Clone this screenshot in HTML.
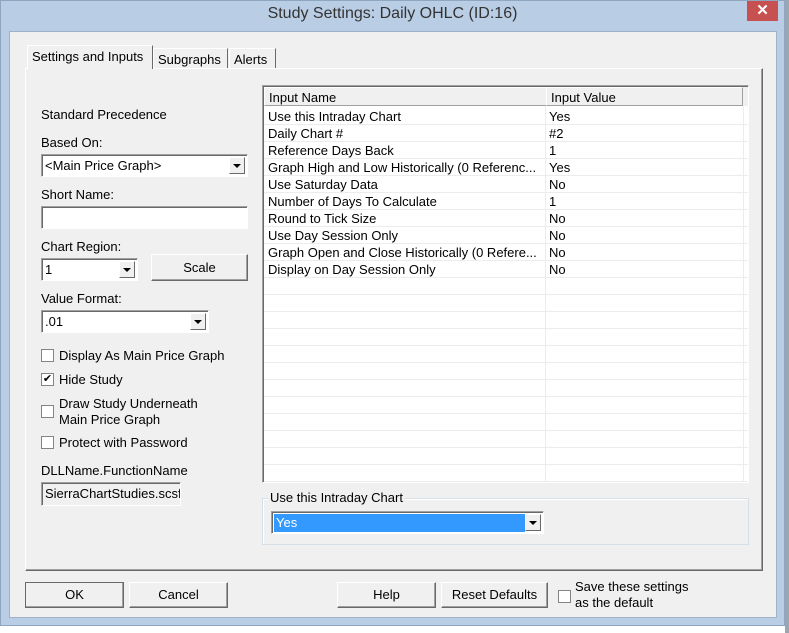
<!DOCTYPE html>
<html><head><style>
*{box-sizing:border-box;margin:0;padding:0}
body{width:789px;height:633px;position:relative;overflow:hidden;background:#fff;font-family:"Liberation Sans",sans-serif;font-size:13px;color:#000}
.a{position:absolute}
.win{left:0;top:0;width:785px;height:626px;background:#b9cee5;border:1px solid #8ea6c0}
.client{left:9px;top:31px;width:768px;height:587px;background:#f0f0f0;border:1px solid #9fb2c8}
.title{left:0;top:5px;width:785px;text-align:center;font-size:16px;color:#333}
.close{left:747px;top:1px;width:31px;height:20px;background:#c75050;color:#fff;text-align:center;font-size:15px;font-weight:bold;line-height:20px}
.panel{left:25px;top:68px;width:738px;height:503px;border:1px solid #fff;border-right-color:#696969;border-bottom-color:#696969;box-shadow:inset -1px -1px 0 #a0a0a0}
.tab{height:22px;border:1px solid #fff;border-right-color:#696969;border-bottom:none;background:#f0f0f0;padding:3px 4px 0;white-space:nowrap}
.sunk{border:1px solid #a0a0a0;border-right-color:#fff;border-bottom-color:#fff;box-shadow:inset 1px 1px 0 #696969;background:#fff}
.dd{position:absolute;right:2px;top:2px;bottom:2px;width:16px;background:#f0f0f0;border:1px solid #fff;border-right-color:#696969;border-bottom-color:#696969}
.dd:after{content:"";position:absolute;left:3px;top:6px;border:4px solid transparent;border-top:4px solid #000;border-bottom:0}
.btn{background:#f0f0f0;border:1px solid #fff;border-right-color:#696969;border-bottom-color:#696969;box-shadow:inset -1px -1px 0 #a0a0a0;text-align:center}
.cb{width:13px;height:13px;background:#fff;border:1px solid #848484}
.grid{left:262px;top:85px;width:487px;height:398px;border:1px solid #a0a0a0;border-right-color:#fff;border-bottom-color:#fff;box-shadow:inset 1px 1px 0 #696969;background:#fff;overflow:hidden}
.row{position:absolute;left:1px;width:484px;height:17px;border-bottom:1px solid #ececec}
.row span{position:absolute;top:1px}
</style></head><body>
<div class="a" style="left:785px;top:0;width:4px;height:633px;background:#9aa6b2"></div>
<div class="a win"></div>
<div class="a title">Study Settings: Daily OHLC (ID:16)</div>
<div class="a close">✕</div>
<div class="a client"></div>
<div class="a panel"></div>
<div class="a tab" style="left:27px;top:45px;width:126px;height:24px;border-bottom:none">Settings and Inputs</div>
<div class="a tab" style="left:153px;top:48px;width:75px;height:20px">Subgraphs</div>
<div class="a tab" style="left:229px;top:48px;width:47px;height:20px">Alerts</div>

<div class="a" style="left:41px;top:107px">Standard Precedence</div>
<div class="a" style="left:41px;top:135px">Based On:</div>
<div class="a sunk" style="left:41px;top:154px;width:207px;height:23px"><span class="a" style="left:3px;top:3px">&lt;Main Price Graph&gt;</span><div class="dd"></div></div>
<div class="a" style="left:41px;top:187px">Short Name:</div>
<div class="a sunk" style="left:41px;top:206px;width:207px;height:23px"></div>
<div class="a" style="left:41px;top:239px">Chart Region:</div>
<div class="a sunk" style="left:41px;top:258px;width:97px;height:23px"><span class="a" style="left:3px;top:3px">1</span><div class="dd"></div></div>
<div class="a btn" style="left:151px;top:254px;width:97px;height:27px;line-height:25px">Scale</div>
<div class="a" style="left:41px;top:291px">Value Format:</div>
<div class="a sunk" style="left:41px;top:310px;width:168px;height:23px"><span class="a" style="left:3px;top:3px">.01</span><div class="dd"></div></div>
<div class="a cb" style="left:41px;top:349px"></div><div class="a" style="left:59px;top:348px">Display As Main Price Graph</div>
<div class="a cb" style="left:41px;top:373px;font-size:11px;line-height:10px;text-align:center">✔</div><div class="a" style="left:59px;top:372px">Hide Study</div>
<div class="a cb" style="left:41px;top:405px"></div><div class="a" style="left:59px;top:396px;line-height:16px">Draw Study Underneath<br>Main Price Graph</div>
<div class="a cb" style="left:41px;top:436px"></div><div class="a" style="left:59px;top:435px">Protect with Password</div>
<div class="a" style="left:41px;top:463px">DLLName.FunctionName</div>
<div class="a" style="left:41px;top:482px;width:140px;height:24px;border:1px solid #a0a0a0;border-right-color:#fff;border-bottom-color:#fff;box-shadow:inset 1px 1px 0 #696969;overflow:hidden;padding:3px 0 0 3px;white-space:nowrap">SierraChartStudies.scsf</div>

<div class="a grid">
<div class="a" style="left:1px;top:1px;width:283px;height:19px;background:#f0f0f0;border:1px solid #fff;border-right-color:#a0a0a0;border-bottom-color:#a0a0a0;padding:2px 0 0 4px">Input Name</div>
<div class="a" style="left:283px;top:1px;width:197px;height:19px;background:#f0f0f0;border:1px solid #fff;border-right-color:#a0a0a0;border-bottom-color:#a0a0a0;padding:2px 0 0 4px">Input Value</div>
<div class="a" style="left:480px;top:1px;width:6px;height:19px;background:#f0f0f0"></div>
<div class="a" style="left:282px;top:20px;width:1px;height:400px;background:#ececec"></div>
<div class="a" style="left:480px;top:20px;width:1px;height:400px;background:#ececec"></div>
<div class="row" style="top:22px"><span style="left:4px">Use this Intraday Chart</span><span style="left:285px">Yes</span></div>
<div class="row" style="top:39px"><span style="left:4px">Daily Chart #</span><span style="left:285px">#2</span></div>
<div class="row" style="top:56px"><span style="left:4px">Reference Days Back</span><span style="left:285px">1</span></div>
<div class="row" style="top:73px"><span style="left:4px">Graph High and Low Historically (0 Referenc...</span><span style="left:285px">Yes</span></div>
<div class="row" style="top:90px"><span style="left:4px">Use Saturday Data</span><span style="left:285px">No</span></div>
<div class="row" style="top:107px"><span style="left:4px">Number of Days To Calculate</span><span style="left:285px">1</span></div>
<div class="row" style="top:124px"><span style="left:4px">Round to Tick Size</span><span style="left:285px">No</span></div>
<div class="row" style="top:141px"><span style="left:4px">Use Day Session Only</span><span style="left:285px">No</span></div>
<div class="row" style="top:158px"><span style="left:4px">Graph Open and Close Historically (0 Refere...</span><span style="left:285px">No</span></div>
<div class="row" style="top:175px"><span style="left:4px">Display on Day Session Only</span><span style="left:285px">No</span></div>
<div class="row" style="top:192px"></div><div class="row" style="top:209px"></div><div class="row" style="top:226px"></div><div class="row" style="top:243px"></div><div class="row" style="top:260px"></div><div class="row" style="top:277px"></div><div class="row" style="top:294px"></div><div class="row" style="top:311px"></div><div class="row" style="top:328px"></div><div class="row" style="top:345px"></div><div class="row" style="top:362px"></div><div class="row" style="top:379px"></div>
</div>

<div class="a" style="left:262px;top:498px;width:487px;height:47px;border:1px solid #d5dfe5;box-shadow:inset 1px 1px 0 #fff"></div>
<div class="a" style="left:268px;top:490px;background:#f0f0f0;padding:0 2px">Use this Intraday Chart</div>
<div class="a" style="left:271px;top:511px;width:273px;height:23px;border:1px solid #a0a0a0;border-right-color:#fff;border-bottom-color:#fff;box-shadow:inset 1px 1px 0 #696969;background:#fff"><div class="a" style="left:2px;top:2px;width:251px;height:18px;background:#3399ff;color:#fff;padding:1px 0 0 2px">Yes</div><div class="dd"></div></div>

<div class="a btn" style="left:25px;top:582px;width:99px;height:26px;line-height:24px;border:1px solid #696969">OK</div>
<div class="a btn" style="left:129px;top:582px;width:99px;height:26px;line-height:24px">Cancel</div>
<div class="a btn" style="left:337px;top:582px;width:99px;height:26px;line-height:24px">Help</div>
<div class="a btn" style="left:441px;top:582px;width:107px;height:26px;line-height:24px">Reset Defaults</div>
<div class="a cb" style="left:558px;top:590px"></div>
<div class="a" style="left:575px;top:579px;line-height:16px">Save these settings<br>as the default</div>
</body></html>
